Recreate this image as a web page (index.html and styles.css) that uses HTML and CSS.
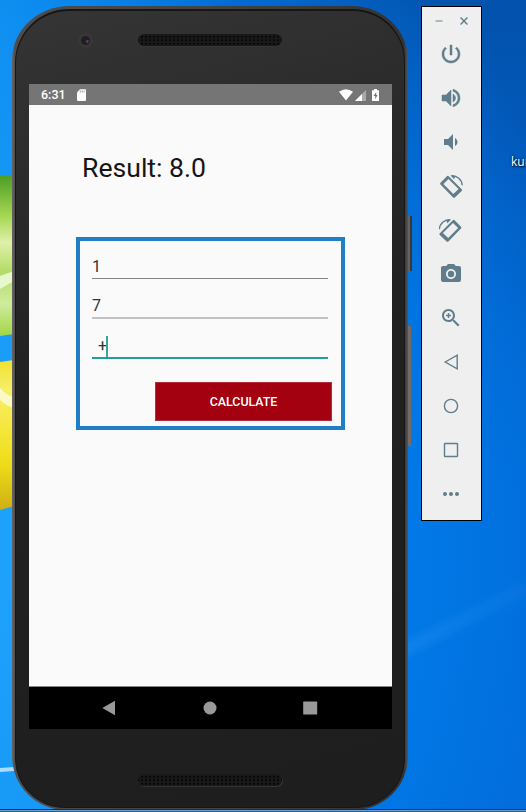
FILE: index.html
```html
<!DOCTYPE html>
<html lang="en">
<head>
<meta charset="utf-8">
<title>Calculator</title>
<link rel="stylesheet" href="styles.css">
</head>
<body>
<div class="desktop">
  <svg class="wallpaper" viewBox="0 0 526 812" aria-hidden="true">
    <defs>
      <linearGradient id="green" x1="0" y1="0" x2="0" y2="1">
        <stop offset="0" stop-color="#4c9c24"/><stop offset=".25" stop-color="#a4d650"/>
        <stop offset=".42" stop-color="#dff0a8"/><stop offset=".6" stop-color="#b2dc68"/>
        <stop offset=".8" stop-color="#cfeb9e"/><stop offset="1" stop-color="#a2d643"/>
      </linearGradient>
      <linearGradient id="yellow" x1="0" y1="0" x2="0" y2="1">
        <stop offset="0" stop-color="#f1e12e"/><stop offset=".2" stop-color="#f7ee6a"/>
        <stop offset=".45" stop-color="#f5e73c"/><stop offset=".7" stop-color="#eedc18"/>
        <stop offset="1" stop-color="#cfae14"/>
      </linearGradient>
      <linearGradient id="ray" x1="0" y1="0" x2="1" y2="0">
        <stop offset="0" stop-color="#2a94f0" stop-opacity=".35"/><stop offset="1" stop-color="#2a94f0" stop-opacity=".1"/>
      </linearGradient>
      <filter id="soft"><feGaussianBlur stdDeviation="4"/></filter>
    </defs>
    <path d="M0 175L14 176V334L0 336Z" fill="url(#green)"/>
    <path d="M0 276L14 271V281L0 289Z" fill="#effbdc" opacity=".85"/>
    <path d="M0 362L14 360V506L0 510Z" fill="url(#yellow)"/>
    <path d="M0 388Q7 396 14 397V408Q6 406 0 400Z" fill="#fbfad0" opacity=".9"/>
    <path d="M0 768L14 767V771L0 772Z" fill="#a8dcfa"/>
    <path d="M400 644L526 580V596L400 660Z" fill="url(#ray)" filter="url(#soft)"/>
  </svg>

  <span class="desktop-label">kur</span>

  <div class="side-key power"></div>
  <div class="side-key volume"></div>
  <div class="phone">
    <div class="bezel">
      <div class="bezel-top">
        <i class="camera"></i>
        <i class="speaker"></i>
      </div>
      <div class="screen">
        <div class="status-bar">
          <span class="clock">6:31</span>
          <svg class="sd" viewBox="0 0 9 12"><path d="M3 .3H8Q9 .3 9 1.300V11Q9 12 8 12H1Q0 12 0 11V3.500Z" fill="#fff"/><path d="M3.300 1.500v2M5.200 1.500v2M7.100 1.500v2" stroke="#888" stroke-width=".8"/></svg>
          <svg class="wifi" viewBox="0 0 14 12"><path d="M0 2.800Q7-2.200 14 2.800L7 11.500Z" fill="#fff"/></svg>
          <svg class="signal" viewBox="0 0 11 11"><path d="M11 0V11H0Z" fill="#aaa"/><path d="M7 4V11H0Z" fill="#fff"/></svg>
          <svg class="battery" viewBox="0 0 7 12"><path d="M2 0H5V1.200H7V12H0V1.200H2Z" fill="#fff"/><path d="M4.200 3L1.600 7H3.200V10.200L5.600 6H4.200Z" fill="#757575"/></svg>
        </div>
        <div class="app">
          <h1 class="result">Result: 8.0</h1>
          <div class="form">
            <div class="field first">1</div>
            <div class="field second">7</div>
            <div class="field active"><span>+</span><i class="caret"></i></div>
            <div class="calculate">CALCULATE</div>
          </div>
        </div>
        <div class="nav-bar">
          <svg viewBox="0 0 16 16"><path d="M1.300 7.900L14 .7V15.200Z"/></svg>
          <svg viewBox="0 0 16 16"><circle cx="8" cy="8" r="6.500"/></svg>
          <svg viewBox="0 0 16 16"><rect x="1.200" y="1.600" width="14" height="13" rx=".7"/></svg>
        </div>
      </div>
      <div class="bezel-bottom"><i class="speaker"></i></div>
    </div>
  </div>

  <div class="toolbar">
    <div class="window-controls">
      <svg viewBox="0 0 10 10"><path d="M1.500 5H8.500" stroke="#9aacb4" stroke-width="1.600"/></svg>
      <svg viewBox="0 0 10 10"><path d="M1.600 1.600L8.400 8.400M8.400 1.600L1.600 8.400" stroke="#607d8b" stroke-width="1.400"/></svg>
    </div>
    <svg class="tool heavy" viewBox="0 0 24 24"><path d="M13 3h-2v10h2V3zm4.830 2.170l-1.420 1.420C17.990 7.860 19 9.810 19 12c0 3.870-3.130 7-7 7s-7-3.130-7-7c0-2.190 1.010-4.140 2.580-5.420L6.170 5.170C4.230 6.820 3 9.260 3 12c0 4.970 4.030 9 9 9s9-4.030 9-9c0-2.740-1.230-5.180-3.170-6.830z"/></svg>
    <svg class="tool heavy" viewBox="0 0 24 24"><path d="M3 9v6h4l5 5V4L7 9H3zm13.500 3c0-1.770-1.020-3.290-2.500-4.030v8.050c1.480-.73 2.500-2.250 2.500-4.020zM14 3.230v2.060c2.890.86 5 3.540 5 6.710s-2.110 5.850-5 6.710v2.060c4.010-.91 7-4.490 7-8.770s-2.990-7.860-7-8.770z"/></svg>
    <svg class="tool" viewBox="0 0 24 24"><path d="M18.500 12c0-1.770-1.020-3.290-2.500-4.030v8.050c1.480-.73 2.500-2.250 2.500-4.020zM5 9v6h4l5 5V4L9 9H5z"/></svg>
    <svg class="tool" viewBox="0 0 24 24"><g id="rotate"><path fill-rule="evenodd" d="M7.900 2.200Q8.800 1.300 9.700 2.200L22.700 15.200Q23.600 16.100 22.700 17L15.900 23.500Q15 24.200 14.100 23.400L1.500 10.600Q.7 9.700 1.500 8.800ZM9.500 4.900L4.400 10L14.300 20L19.600 14.900Z"/><path class="line" d="M12.500 1.800C18 1.500 22.800 5.500 23.200 11.200"/><path d="M11.500 1.200L16.500 1.900L15 5.200Z"/></g></svg>
    <svg class="tool" viewBox="0 0 24 24"><use href="#rotate" transform="translate(23.500 0) scale(-1 1)"/></svg>
    <svg class="tool" viewBox="0 0 24 24"><path fill-rule="evenodd" d="M9 2L7.170 4H4c-1.100 0-2 .9-2 2v12c0 1.100.9 2 2 2h16c1.100 0 2-.9 2-2V6c0-1.100-.9-2-2-2h-3.170L15 2H9zm3 15c-2.760 0-5-2.240-5-5s2.240-5 5-5 5 2.240 5 5-2.240 5-5 5z"/><circle cx="12" cy="12" r="3.200"/></svg>
    <svg class="tool" viewBox="0 0 24 24"><path d="M15.500 14h-.79l-.28-.27C15.410 12.590 16 11.110 16 9.500 16 5.910 13.090 3 9.500 3S3 5.910 3 9.500 5.910 16 9.500 16c1.610 0 3.090-.59 4.230-1.570l.27.280v.79l5 4.990L20.490 19l-4.990-5zm-6 0C7.010 14 5 11.990 5 9.500S7.010 5 9.500 5 14 7.010 14 9.500 11.990 14 9.500 14z"/><path class="line" d="M9.500 7v5M7 9.500h5"/></svg>
    <svg class="tool" viewBox="0 0 24 24"><path class="line" d="M6.200 12L18.200 5.200V18.800Z"/></svg>
    <svg class="tool" viewBox="0 0 24 24"><circle class="line" cx="12" cy="12" r="6.600"/></svg>
    <svg class="tool" viewBox="0 0 24 24"><rect class="line" x="5.500" y="5.500" width="13" height="13" rx=".6"/></svg>
    <svg class="tool" viewBox="0 0 24 24"><circle cx="6" cy="12" r="2"/><circle cx="12" cy="12" r="2"/><circle cx="18" cy="12" r="2"/></svg>
  </div>
  <div class="taskbar-edge"></div>
</div>
</body>
</html>
```

FILE: styles.css
```css
* { box-sizing: border-box; }

body {
  margin: 0;
  font-family: Roboto, sans-serif;
}

svg { display: block; }

.desktop {
  position: relative;
  width: 526px;
  height: 812px;
  overflow: hidden;
  background:
    linear-gradient(90deg, rgba(30, 166, 251, .5) 0, rgba(30, 166, 251, 0) 45%),
    radial-gradient(ellipse 620px 780px at 0 540px, #1ea0fb 0, #128ff4 35%, #0078e6 68%, rgba(0, 108, 214, 0) 100%),
    linear-gradient(#0352ac 0, #025dc2 30%, #0269d6 60%, #0369d8 100%);
}

.wallpaper {
  position: absolute;
  inset: 0;
  width: 526px;
  height: 812px;
}

.desktop-label {
  position: absolute;
  left: 511px;
  top: 154px;
  color: #fff;
  font: 12px/16px "Open Sans", sans-serif;
  text-shadow: 1px 1px 2px #000, 0 0 2px #012;
}

/* Phone */
.phone {
  position: absolute;
  left: 12px;
  top: 6px;
  width: 396px;
  height: 804px;
  padding: 3px 3px 2px 3px;
  border-radius: 58px 56px 54px 54px / 54px 54px 54px 54px;
  background: linear-gradient(90deg, #6a6666 0, #4e4c4c 3px, #444 50%, #333 99%, #555 100%);
}

.bezel {
  display: flex;
  flex-direction: column;
  height: 100%;
  padding: 0 12px 0 13px;
  border: 1px solid #161616;
  border-width: 2px 1px 1px 1px;
  border-radius: 54px 52px 50px 50px;
  background: linear-gradient(165deg, #353535 0, #2b2b2b 20%, #212121 45%, #1e1e1e 100%);
}

.bezel-top {
  display: flex;
  align-items: center;
  height: 73px;
  padding: 0 0 15px 49px;
}

.camera {
  width: 15px;
  height: 15px;
  border: 3px solid #373737;
  border-radius: 50%;
  background: radial-gradient(circle at 70% 60%, #5a3c56 0 1px, #211d25 2px);
}

.speaker {
  width: 144px;
  height: 12px;
  border-radius: 6px;
  background: radial-gradient(circle, #060606 0 .8px, #191919 1.300px) 2px 1px / 4px 3.500px;
  box-shadow: 1px 1px 0 #343434;
}

.bezel-top .speaker { margin-left: 45px; }

.bezel-bottom {
  padding: 45px 0 0 109px;
}

.bezel-bottom .speaker { display: block; }

.side-key { position: absolute; }

.side-key.power {
  left: 407px;
  top: 216px;
  width: 5px;
  height: 55px;
  background: linear-gradient(90deg, #68625e 0 3px, #37383c 3px);
}

.side-key.volume {
  left: 407px;
  top: 326px;
  width: 4px;
  height: 120px;
  background: #756b66;
}

.screen {
  display: flex;
  flex-direction: column;
  flex: none;
  width: 363px;
  height: 645px;
  background: #fafafa;
}

.status-bar {
  display: flex;
  align-items: center;
  height: 21px;
  padding: 0 13px 0 12px;
  background: #757575;
}

.clock {
  width: 25px;
  color: #fff;
  font-size: 12.500px;
  font-weight: 500;
  line-height: 21px;
}

.sd { width: 9px; height: 12px; margin-left: 11px; }
.wifi { width: 14px; height: 12px; margin-left: auto; }
.signal { width: 11px; height: 11px; margin: 1px 6px 0 2px; }
.battery { width: 7px; height: 12px; }

.app {
  flex: 1;
  padding: 45px 47px 0;
  border-bottom: 1px solid #858585;
}

.result {
  margin: 0 0 0 6px;
  color: #151515;
  font-size: 26.600px;
  font-weight: 400;
  line-height: 36px;
}

.form {
  width: 268.500px;
  height: 193px;
  margin-top: 51px;
  padding: 15px 8.500px 0 12px;
  border: 4px solid #1f7fc4;
}

.field {
  display: flex;
  align-items: center;
  width: 236px;
  height: 23px;
  margin-bottom: 16px;
  color: #333;
  font-size: 16px;
  line-height: 20px;
  border-bottom: 1px solid #848484;
}

.field.second {
  height: 24px;
  margin-bottom: 16px;
  border-bottom: 2px solid #c2c2c2;
}

.field.active {
  height: 24px;
  padding-left: 6px;
  margin-bottom: 23px;
  border-bottom: 2px solid #22a093;
}

.field.active span { width: 8px; }

.caret {
  width: 2px;
  height: 21px;
  background: #35a79c;
}

.calculate {
  width: 177px;
  height: 39px;
  margin-left: 63px;
  background: #a30010;
  border: 1px solid #b52c3b;
  color: #fff;
  font-size: 12.400px;
  font-weight: 500;
  line-height: 38px;
  text-align: center;
}

.nav-bar {
  display: flex;
  justify-content: space-between;
  align-items: center;
  height: 42px;
  padding: 0 74px 1px 72px;
  background: #000;
}

.nav-bar svg {
  width: 16px;
  height: 16px;
  fill: #999;
}

/* Emulator toolbar */
.toolbar {
  position: absolute;
  left: 421px;
  top: 6px;
  display: flex;
  flex-direction: column;
  align-items: center;
  gap: 20px;
  width: 61px;
  height: 515px;
  padding-right: 1px;
  border: 1px solid #000;
  background: #efefef;
}

.window-controls {
  display: flex;
  gap: 15px;
  height: 9px;
  padding: 9px 0 0 1px;
}

.window-controls svg { width: 10px; height: 10px; }

.tool {
  flex: none;
  width: 24px;
  height: 24px;
  fill: #607d8b;
}

.tool.heavy {
  stroke: #607d8b;
  stroke-width: .5;
}

.window-controls + .tool { margin-top: 6px; }

.tool .line {
  fill: none;
  stroke: #607d8b;
  stroke-width: 1.400;
}

.taskbar-edge {
  position: absolute;
  left: 0;
  bottom: 0;
  width: 526px;
  height: 3px;
  background: linear-gradient(#17314d 0 1px, #6aa0d0 1px 2px, #245f9a 2px);
}
```
